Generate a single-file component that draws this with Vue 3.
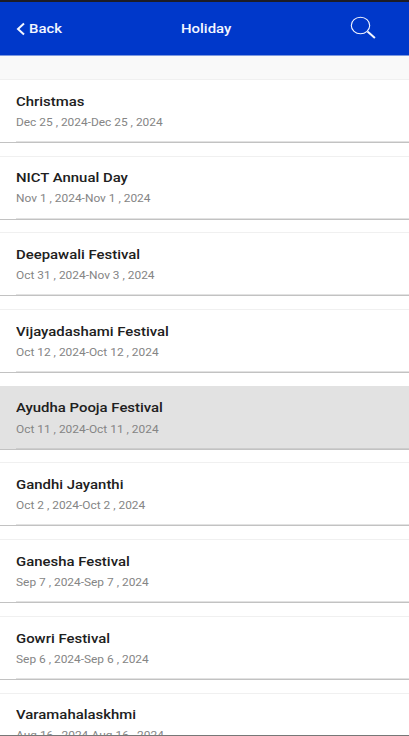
<script setup>
const holidays = [
  { name: 'Christmas', dates: 'Dec 25 , 2024-Dec 25 , 2024' },
  { name: 'NICT Annual Day', dates: 'Nov 1 , 2024-Nov 1 , 2024' },
  { name: 'Deepawali Festival', dates: 'Oct 31 , 2024-Nov 3 , 2024' },
  { name: 'Vijayadashami Festival', dates: 'Oct 12 , 2024-Oct 12 , 2024' },
  { name: 'Ayudha Pooja Festival', dates: 'Oct 11 , 2024-Oct 11 , 2024', pressed: true },
  { name: 'Gandhi Jayanthi', dates: 'Oct 2 , 2024-Oct 2 , 2024' },
  { name: 'Ganesha Festival', dates: 'Sep 7 , 2024-Sep 7 , 2024' },
  { name: 'Gowri Festival', dates: 'Sep 6 , 2024-Sep 6 , 2024' },
  { name: 'Varamahalaskhmi', dates: 'Aug 16 , 2024-Aug 16 , 2024' },
]
</script>

<template>
  <div class="screen">
    <header class="bar">
      <button class="back">
        <svg class="chevron" viewBox="0 0 9 14" width="9" height="14"><path d="M8 1.4 2 7 8 12.6" /></svg>
        <span class="wide">Back</span>
      </button>
      <h1 class="heading">Holiday</h1>
      <button class="search">
        <svg viewBox="0 0 26 24" width="26" height="24">
          <ellipse cx="10.5" cy="9.5" rx="9.2" ry="8.2" />
          <path d="m17.5 15.5 7.4 6.6" />
        </svg>
      </button>
    </header>
    <main class="list">
      <article v-for="h in holidays" :key="h.name" class="item" :class="{ pressed: h.pressed }">
        <h2 class="name">{{ h.name }}</h2>
        <p class="dates">{{ h.dates }}</p>
      </article>
    </main>
  </div>
</template>

<style>
body { margin: 0; overflow: hidden; }
</style>

<style scoped>
.screen {
  box-sizing: border-box;
  height: 736px;
  overflow: hidden;
  display: flex;
  flex-direction: column;
  background: #fff;
  border-bottom: 1px solid #777;
  font-family: Roboto, "Liberation Sans", sans-serif;
}
.bar {
  box-sizing: border-box;
  flex: none;
  height: 56px;
  padding: 0 33px 0 16px;
  border-top: 2px solid #1c1c26;
  border-bottom: 1px solid #7c98df;
  background: #0038ca;
  color: #f3f6ff;
  display: grid;
  grid-template-columns: 167px 1fr auto;
  align-items: center;
}
button {
  padding: 0;
  border: 0;
  background: none;
  color: inherit;
  font: 500 13.5px/18px Roboto, sans-serif;
}
.back { display: flex; align-items: center; gap: 4px; }
svg { display: block; fill: none; stroke: #f3f6ff; }
.chevron { stroke-width: 2; margin-top: 1px; }
.wide, .heading, .name { transform: scaleX(1.104); transform-origin: left; }
.wide { margin-bottom: 2px; }
.heading { margin: 0 0 2px -2px; width: max-content; font-size: 13.5px; line-height: 18px; font-weight: 500; }
.search { margin-bottom: 1px; }
.search ellipse { stroke-width: 1.1; }
.search path { stroke-width: 2; }
.list {
  flex: 1;
  min-height: 0;
  overflow: hidden;
  border-top: 23px solid #f9f9f9;
}
.item {
  box-sizing: border-box;
  height: 64px;
  margin-bottom: 12.7px;
  padding: 11.7px 0 0 16px;
  border-top: 1px solid #f0f0f0;
  border-bottom: 1px solid #c2c2c2;
  background: linear-gradient(#e2e2e2, #e2e2e2) 16px 100% / 100% 1px no-repeat;
}
.pressed {
  border-top-color: #e2e2e2;
  background: linear-gradient(#cdcdcd, #cdcdcd) 16px 100% / 100% 1px no-repeat #e2e2e2;
}
.name {
  margin: 0;
  width: max-content;
  font-size: 13.5px;
  line-height: 18px;
  font-weight: 500;
  color: #202020;
}
.dates {
  margin: 5.1px 0 0;
  width: max-content;
  font-size: 11px;
  line-height: 16px;
  color: #858585;
  transform: scaleX(1.082);
  transform-origin: left;
}
</style>
